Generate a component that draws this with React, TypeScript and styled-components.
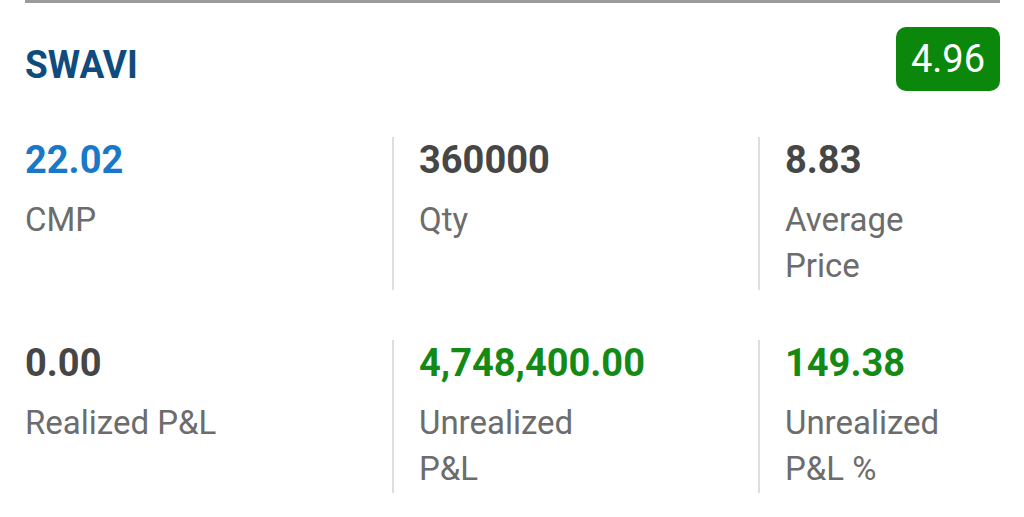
import React from 'react'
import styled, { createGlobalStyle } from 'styled-components'

const GlobalStyle = createGlobalStyle`
  html, body {
    margin: 0;
    padding: 0;
    background: #ffffff;
    font-family: Roboto, "Liberation Sans", Arial, sans-serif;
  }
`

const Card = styled.div`
  padding: 0 24px 0 25px;
  width: 1024px;
  box-sizing: border-box;
`

const TopRule = styled.div`
  height: 3px;
  background: #9b9b9b;
`

const Header = styled.div`
  display: flex;
  align-items: center;
  justify-content: space-between;
  padding-top: 24px;
`

const Symbol = styled.span`
  margin-top: 10px;
  font-size: 37px;
  font-weight: 700;
  color: #0f4c7d;
  letter-spacing: 0;
  transform: scaleY(1.05);
`

const Badge = styled.span`
  display: flex;
  align-items: center;
  justify-content: center;
  width: 104px;
  height: 64px;
  border-radius: 10px;
  background: #0b880b;
  color: #ffffff;
  font-size: 38px;
`

const Grid = styled.div`
  display: grid;
  grid-template-columns: 367px 366px 1fr;
  row-gap: 50px;
  margin-top: 46px;
`

const Cell = styled.div<{ $divider?: boolean }>`
  height: 153px;
  box-sizing: border-box;
  padding-left: ${p => (p.$divider ? '25px' : '0')};
  border-left: ${p => (p.$divider ? '2px solid #dedede' : 'none')};
`

const Value = styled.div<{ $tone: 'plain' | 'blue' | 'green' }>`
  font-size: 38px;
  font-weight: 700;
  line-height: 46px;
  color: ${p => (p.$tone === 'blue' ? '#1a78c9' : p.$tone === 'green' ? '#138a16' : '#464646')};
`

const Label = styled.div`
  margin-top: 14px;
  font-size: 33px;
  line-height: 46px;
  color: #6c6c6c;
`

type Stat = {
  value: string
  label: string[]
  tone: 'plain' | 'blue' | 'green'
}

const stats: Stat[] = [
  { value: '22.02', label: ['CMP'], tone: 'blue' },
  { value: '360000', label: ['Qty'], tone: 'plain' },
  { value: '8.83', label: ['Average', 'Price'], tone: 'plain' },
  { value: '0.00', label: ['Realized P&L'], tone: 'plain' },
  { value: '4,748,400.00', label: ['Unrealized', 'P&L'], tone: 'green' },
  { value: '149.38', label: ['Unrealized', 'P&L %'], tone: 'green' }
]

export default function App() {
  return (
    <Card>
      <GlobalStyle />
      <TopRule />
      <Header>
        <Symbol>SWAVI</Symbol>
        <Badge>4.96</Badge>
      </Header>
      <Grid>
        {stats.map((s, i) => (
          <Cell key={i} $divider={i % 3 !== 0}>
            <Value $tone={s.tone}>{s.value}</Value>
            <Label>
              {s.label.map((line, j) => (
                <div key={j}>{line}</div>
              ))}
            </Label>
          </Cell>
        ))}
      </Grid>
    </Card>
  )
}
